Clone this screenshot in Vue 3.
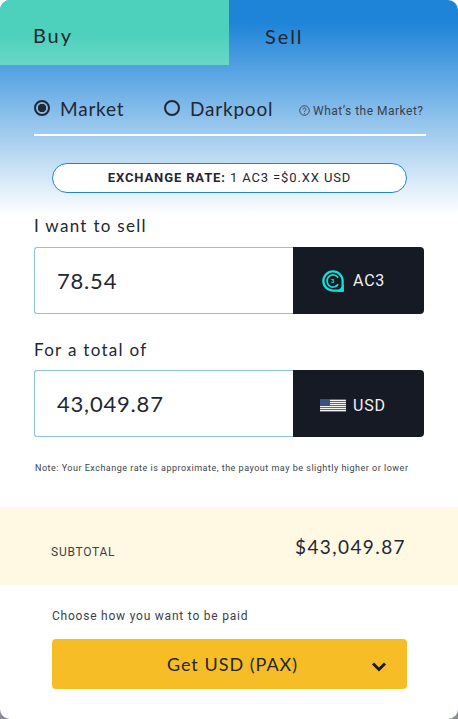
<template>
  <div class="card">
    <!-- Buy / Sell tabs -->
    <div class="tabs">
      <div class="tab tab-active">Buy</div>
      <div class="tab tab-sell">Sell</div>
    </div>

    <div class="order-types">
      <label class="radio">
        <span class="radio-ring radio-on"></span>
        <span>Market</span>
      </label>
      <label class="radio radio-dark">
        <span class="radio-ring"></span>
        <span>Darkpool</span>
      </label>
      <span class="help">
        <svg class="help-icon" viewBox="0 0 12 12" width="11" height="11">
          <circle cx="6" cy="6" r="5.2" fill="none" stroke="currentColor" stroke-width="1" />
          <path d="M4.4 4.8a1.6 1.6 0 1 1 2.5 1.3c-.6.4-.9.6-.9 1.3" fill="none" stroke="currentColor" stroke-width="1" />
          <circle cx="6" cy="9" r=".6" fill="currentColor" />
        </svg>
        What’s the Market?
      </span>
    </div>

    <div class="rate"><b>EXCHANGE RATE:</b> 1 AC3 =$0.XX USD</div>

    <div class="field">
      <div class="field-label">I want to sell</div>
      <div class="field-row">
        <div class="amount">78.54</div>
        <div class="unit">
          <svg class="coin" viewBox="0 0 24 24" width="22" height="22">
            <path d="M12 1.5a10.5 10.5 0 1 0 0 21h10.5V12A10.5 10.5 0 0 0 12 1.5z" fill="none" stroke="#10e2da" stroke-width="2.5" />
            <path d="M17.6 8.4a6.6 6.6 0 1 0 0 7.2" fill="none" stroke="#10e2da" stroke-width="1.9" />
            <path d="M16.5 23.7h7.2V16z" fill="#10e2da" />
            <text x="12" y="14.4" class="coin-three">3</text>
          </svg>
          <span>AC3</span>
        </div>
      </div>
    </div>

    <div class="field field-total">
      <div class="field-label">For a total of</div>
      <div class="field-row">
        <div class="amount">43,049.87</div>
        <div class="unit unit-usd">
          <svg viewBox="0 0 26 13" width="26" height="13">
            <rect width="26" height="13" fill="#f4f4f4" />
            <rect v-for="y in stripes" :key="y" x="0" :y="y" width="26" height="1" fill="#b8444f" />
            <rect width="10" height="7" fill="#3c4f82" />
          </svg>
          <span>USD</span>
        </div>
      </div>
    </div>

    <p class="note">Note: Your Exchange rate is approximate, the payout may be slightly higher or lower</p>

    <div class="subtotal">
      <span class="subtotal-label">SUBTOTAL</span>
      <span class="subtotal-value">$43,049.87</span>
    </div>

    <div class="payout">
      <div class="payout-label">Choose how you want to be paid</div>
      <div class="payout-select">
        <span>Get USD (PAX)</span>
        <svg class="chevron" viewBox="0 0 16 11" width="16" height="11">
          <path d="M2 2.5l6 6 6-6" fill="none" stroke="#171c28" stroke-width="3" />
        </svg>
      </div>
    </div>
  </div>
</template>

<script setup>
const stripes = [0, 2, 4, 6, 8, 10, 12]
</script>

<style>
html, body {
  margin: 0;
  background: linear-gradient(#ffffff 50%, #8a8d93 50%);
}
</style>

<style scoped>
.card {
  width: 458px;
  height: 719px;
  overflow: hidden;
  border-radius: 10px;
  color: #232733;
  font-family: Lato, "Noto Sans", sans-serif;
  background: linear-gradient(#1e84d8 0, #1e84d8 22px, #ffffff 215px);
}

/* Tabs */
.tabs {
  display: flex;
  height: 65px;
}
.tab {
  font-size: 20px;
  line-height: 72px;
  letter-spacing: 1.9px;
}
.tab-active {
  width: 196px;
  padding-left: 33px;
  line-height: 71px;
  background: linear-gradient(#4ed1bc 55%, #6ad8c6);
}
.tab-sell {
  padding-left: 36px;
}

/* Market / Darkpool */
.order-types {
  display: flex;
  align-items: center;
  box-sizing: border-box;
  height: 71px;
  margin: 0 32px 0 34px;
  padding-top: 17px;
  border-bottom: 2px solid #ffffff;
}
.radio {
  display: flex;
  align-items: center;
  gap: 10px;
  width: 130px;
  font-size: 19px;
  letter-spacing: 0.8px;
}
.radio-dark {
  width: 135px;
}
.radio-ring {
  box-sizing: border-box;
  width: 16px;
  height: 16px;
  border: 2px solid #232733;
  border-radius: 50%;
}
.radio-on {
  background: radial-gradient(circle, #232733 0 4px, transparent 4.5px);
}
.help {
  display: flex;
  align-items: center;
  gap: 3px;
  margin-top: 5px;
  font-family: Roboto, sans-serif;
  font-size: 12px;
  letter-spacing: 0.5px;
  white-space: nowrap;
  color: #3a3f4b;
}

/* Rate pill */
.rate {
  box-sizing: border-box;
  width: 355px;
  height: 30px;
  margin: 27px 0 0 52px;
  border: 1px solid #1e84d8;
  border-radius: 15px;
  background: #ffffff;
  font-family: Roboto, sans-serif;
  font-size: 13px;
  line-height: 28px;
  letter-spacing: 0.87px;
  text-align: center;
}

/* Amount fields */
.field {
  margin: 23px 34px 0;
}
.field-total {
  margin-top: 26px;
}
.field-label {
  margin-bottom: 11px;
  font-size: 17px;
  line-height: 20px;
  letter-spacing: 1.3px;
}
.field-total .field-label {
  margin-bottom: 10px;
}
.field-row {
  display: flex;
  height: 67px;
}
.amount {
  box-sizing: border-box;
  width: 259px;
  padding-left: 22px;
  border: 1px solid #8cc0ec;
  border-right: 0;
  border-radius: 3px 0 0 3px;
  font-size: 22px;
  line-height: 65px;
  letter-spacing: 0.8px;
}
.unit {
  display: flex;
  align-items: center;
  gap: 7px;
  width: 131px;
  box-sizing: border-box;
  padding-left: 27px;
  border-radius: 0 4px 4px 0;
  background: #161a25;
  color: #f0f1f3;
  font-family: Roboto, sans-serif;
  font-size: 16px;
  letter-spacing: 0.8px;
}
.unit-usd {
  padding-top: 3px;
}
.coin {
  margin: 0 2px;
}
.coin-three {
  font-family: Roboto, sans-serif;
  font-size: 6.5px;
  font-weight: 700;
  fill: #10e2da;
  text-anchor: middle;
}

.note {
  margin: 25px 0 0 35px;
  font-family: Roboto, sans-serif;
  font-size: 9px;
  line-height: 12px;
  letter-spacing: 0.5px;
  color: #3a3f4b;
}

/* Subtotal band */
.subtotal {
  display: flex;
  justify-content: space-between;
  height: 78px;
  margin-top: 33px;
  padding: 0 52px 0 51px;
  background: #fff9e3;
}
.subtotal-label {
  margin-top: 38px;
  font-family: Roboto, sans-serif;
  font-size: 12px;
  line-height: 14px;
  letter-spacing: 0.75px;
  color: #3a3f4b;
}
.subtotal-value {
  margin-top: 27px;
  font-size: 19px;
  line-height: 26px;
  letter-spacing: 1.4px;
}

/* Payout */
.payout {
  margin: 24px 51px 0 52px;
}
.payout-label {
  font-family: Roboto, sans-serif;
  font-size: 12px;
  line-height: 14px;
  letter-spacing: 0.78px;
  color: #3a3f4b;
}
.payout-select {
  position: relative;
  box-sizing: border-box;
  height: 50px;
  margin-top: 16px;
  padding-left: 6px;
  border-radius: 4px;
  background: #f7bd27;
  font-size: 18px;
  line-height: 50px;
  letter-spacing: 1px;
  text-align: center;
}
.chevron {
  position: absolute;
  right: 20px;
  top: 22px;
}
</style>
